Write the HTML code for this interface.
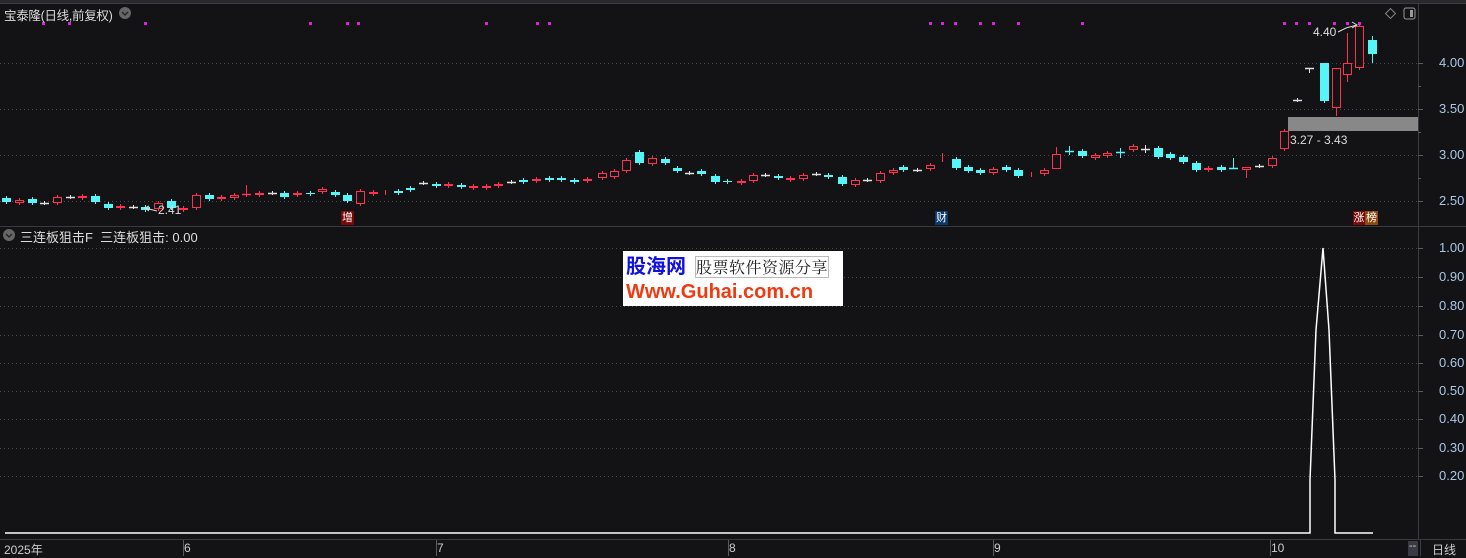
<!DOCTYPE html>
<html><head><meta charset="utf-8"><style>
html,body{margin:0;padding:0;background:#131214;width:1466px;height:556px;overflow:hidden;font-family:"Liberation Sans","Noto Sans CJK SC",sans-serif;}
.t{position:absolute;white-space:nowrap;}
</style></head><body>
<div style="position:absolute;left:0;top:0;width:1466px;height:556px;">
<svg id="s" width="1466" height="556" style="position:absolute;left:0;top:0" xmlns="http://www.w3.org/2000/svg">
<rect x="0" y="0" width="1466" height="3" fill="#2a2a2e"/>
<line x1="0" y1="3.5" x2="1466" y2="3.5" stroke="#3a3a40"/>
<line x1="1418.5" y1="4" x2="1418.5" y2="540" stroke="#3a3a40"/>
<line x1="0" y1="226.5" x2="1466" y2="226.5" stroke="#3a3a40"/>
<line x1="0" y1="539.5" x2="1466" y2="539.5" stroke="#3a3a40"/>
<line x1="1420.5" y1="540" x2="1420.5" y2="556" stroke="#3a3a40"/>
<g stroke="#4a4a50" stroke-dasharray="1,3">
<line x1="0" y1="63.5" x2="1418" y2="63.5"/><line x1="0" y1="109.5" x2="1418" y2="109.5"/>
<line x1="0" y1="155.5" x2="1418" y2="155.5"/><line x1="0" y1="201.5" x2="1418" y2="201.5"/>
<line x1="0" y1="248.5" x2="1418" y2="248.5"/><line x1="0" y1="277.5" x2="1418" y2="277.5"/>
<line x1="0" y1="306.5" x2="1418" y2="306.5"/><line x1="0" y1="335.5" x2="1418" y2="335.5"/>
<line x1="0" y1="363.5" x2="1418" y2="363.5"/><line x1="0" y1="391.5" x2="1418" y2="391.5"/>
<line x1="0" y1="419.5" x2="1418" y2="419.5"/><line x1="0" y1="448.5" x2="1418" y2="448.5"/>
<line x1="0" y1="476.5" x2="1418" y2="476.5"/>
</g>
<g stroke="#5a5a60">
<line x1="1418" y1="63.5" x2="1423" y2="63.5"/><line x1="1418" y1="109.5" x2="1423" y2="109.5"/>
<line x1="1418" y1="155.5" x2="1423" y2="155.5"/><line x1="1418" y1="201.5" x2="1423" y2="201.5"/>
<line x1="1418" y1="86.5" x2="1421" y2="86.5"/><line x1="1418" y1="132.5" x2="1421" y2="132.5"/><line x1="1418" y1="178.5" x2="1421" y2="178.5"/>
<line x1="1418" y1="248.5" x2="1423" y2="248.5"/><line x1="1418" y1="277.5" x2="1423" y2="277.5"/><line x1="1418" y1="306.5" x2="1423" y2="306.5"/><line x1="1418" y1="335.5" x2="1423" y2="335.5"/><line x1="1418" y1="363.5" x2="1423" y2="363.5"/><line x1="1418" y1="391.5" x2="1423" y2="391.5"/><line x1="1418" y1="419.5" x2="1423" y2="419.5"/><line x1="1418" y1="448.5" x2="1423" y2="448.5"/><line x1="1418" y1="476.5" x2="1423" y2="476.5"/>
<line x1="183.5" y1="540" x2="183.5" y2="556"/><line x1="436.5" y1="540" x2="436.5" y2="556"/><line x1="728.5" y1="540" x2="728.5" y2="556"/><line x1="993.5" y1="540" x2="993.5" y2="556"/><line x1="1270.5" y1="540" x2="1270.5" y2="556"/>
</g>
<rect x="1288" y="117" width="130" height="14" fill="#888"/>
<g id="c"></g>
<g fill="#e020e0" id="m"></g>
<polyline points="5,533 1310,533 1310,480 1316,330 1323,248 1329,330 1335,480 1335,533 1373,533" fill="none" stroke="#fff" stroke-width="1.5"/>
<polyline points="1338,32 1346,28 1357,25" fill="none" stroke="#ddd" stroke-width="1"/>
<polyline points="1352,22 1357,25 1352,28" fill="none" stroke="#ddd"/>
<polyline points="145,208 157,211" fill="none" stroke="#ddd"/>
<polyline points="149,206 145,208 149,211" fill="none" stroke="#ddd"/>
<rect x="1387" y="10" width="7" height="7" fill="none" stroke="#888" transform="rotate(45 1390.5 13.5)"/>
<rect x="1404" y="8" width="11" height="11" rx="2" fill="none" stroke="#999"/>
<rect x="1410" y="10" width="3" height="7" fill="#999"/>
<circle cx="125" cy="13" r="6" fill="#666"/><polyline points="122,12 125,15 128,12" fill="none" stroke="#222" stroke-width="1.3"/>
<circle cx="9" cy="235" r="6" fill="#666"/><polyline points="6,234 9,237 12,234" fill="none" stroke="#222" stroke-width="1.3"/>
<rect x="1408" y="541" width="10" height="15" fill="#3a3a44"/>
</svg>
<div class="t" style="left:4px;top:5px;font-size:12.5px;letter-spacing:-0.3px;color:#ddd">宝泰隆(日线,前复权)</div>
<div class="t" style="left:20px;top:227px;font-size:13px;color:#ddd">三连板狙击F&nbsp; 三连板狙击: 0.00</div>
<div class="t" style="left:1290px;top:133px;font-size:12px;color:#ddd">3.27 - 3.43</div>
<div class="t" style="left:1313px;top:25px;font-size:12px;color:#ddd">4.40</div>
<div class="t" style="left:158px;top:203px;font-size:12px;color:#ddd">2.41</div>
<div class="t" style="left:341px;top:211px;width:13px;height:14px;background:#7a0808;color:#fff;font-size:11px;line-height:14px;text-align:center">增</div>
<div class="t" style="left:935px;top:211px;width:13px;height:14px;background:#0a3a6a;color:#fff;font-size:11px;line-height:14px;text-align:center">财</div>
<div class="t" style="left:1353px;top:211px;width:12px;height:14px;background:#7a0808;color:#fff;font-size:11px;line-height:14px;text-align:center">涨</div>
<div class="t" style="left:1365px;top:211px;width:13px;height:14px;background:#8a4a10;color:#fff;font-size:11px;line-height:14px;text-align:center">榜</div>
<div style="position:absolute;left:1439px;top:0;font-size:13px;color:#a8c8e8;line-height:1">
<div class="t" style="top:56px">4.00</div><div class="t" style="top:102px">3.50</div><div class="t" style="top:148px">3.00</div><div class="t" style="top:194px">2.50</div>
<div class="t" style="top:241px">1.00</div><div class="t" style="top:270px">0.90</div><div class="t" style="top:299px">0.80</div><div class="t" style="top:328px">0.70</div><div class="t" style="top:356px">0.60</div><div class="t" style="top:384px">0.50</div><div class="t" style="top:412px">0.40</div><div class="t" style="top:441px">0.30</div><div class="t" style="top:469px">0.20</div>
</div>
<div class="t" style="left:4px;top:541px;font-size:12px;color:#ccc">2025年</div>
<div class="t" style="left:184px;top:541px;font-size:12px;color:#ccc">6</div>
<div class="t" style="left:437px;top:541px;font-size:12px;color:#ccc">7</div>
<div class="t" style="left:729px;top:541px;font-size:12px;color:#ccc">8</div>
<div class="t" style="left:994px;top:541px;font-size:12px;color:#ccc">9</div>
<div class="t" style="left:1271px;top:541px;font-size:12px;color:#ccc">10</div>
<div class="t" style="left:1409px;top:540px;font-size:11px;color:#ccc">--</div>
<div class="t" style="left:1432px;top:541px;font-size:12px;color:#ccc">日线</div>
<div style="position:absolute;left:623px;top:251px;width:220px;height:55px;background:#fff;">
<div class="t" style="left:3px;top:2px;font-size:20px;font-weight:bold;color:#1010e0;font-family:'Noto Sans CJK SC',sans-serif;line-height:24px">股海网</div>
<div class="t" style="left:72px;top:5px;font-size:16px;color:#222;font-family:'Noto Serif CJK SC',serif;line-height:20px;letter-spacing:0.5px;border:1px solid #bbb">股票软件资源分享</div>
<div class="t" style="left:3px;top:29px;font-size:20px;font-weight:bold;color:#f03a10;line-height:24px">Www.Guhai.com.cn</div>
</div>
</div>
<script>
var C=[
[6,'c',198,202],[19,'r',200,203],[32,'c',199,203],[44,'w',203,203],[57,'r',197,203],[70,'w',197,197],[82,'r',196,198],[95,'c',196,202],[108,'c',204,208],[120,'r',206,208],[133,'w',207,207],[145,'c',207,210],[158,'r',203,209],[171,'c',201,208],[183,'r',208,210],[196,'r',195,208],[209,'c',195,199],[221,'r',197,199],[234,'r',195,198],[246,'r',194,194,185,197],[259,'r',193,195],[272,'w',193,193],[284,'c',193,197],[297,'r',193,195],[310,'c',193,194],[322,'r',189,192],[335,'c',192,195],[347,'c',195,201],[360,'r',191,204],[373,'r',192,194],[385,'r',192,193],[398,'c',191,193],[410,'c',188,190],[423,'w',183,183],[436,'c',184,186],[448,'r',184,186],[461,'c',185,187],[473,'r',186,188],[486,'r',186,188],[498,'r',184,186],[511,'w',182,182],[523,'c',180,182],[536,'r',179,181],[549,'c',178,180],[561,'c',178,180],[574,'c',180,182],[587,'r',179,181],[602,'r',173,178],[614,'r',171,177],[626,'r',160,171],[639,'c',152,163],[652,'r',158,164],[665,'c',159,163],[677,'c',168,171],[689,'w',173,173],[701,'c',171,174],[715,'c',176,182],[727,'c',181,182],[741,'r',181,183],[753,'r',175,181],[765,'w',175,175],[778,'c',176,178],[790,'r',178,180],[803,'r',175,179],[816,'w',174,174],[828,'c',175,177],[842,'c',177,184],[855,'r',180,185],[867,'w',180,180],[880,'r',173,181],[893,'r',170,173],[903,'c',167,170],[917,'w',170,170],[930,'r',165,169],[942,'r',158,159,153,162],[956,'c',159,168],[968,'c',167,171],[980,'c',170,173],[993,'r',169,173],[1006,'c',167,170],[1018,'c',170,176],[1031,'r',174,175],[1044,'r',170,174],[1056,'r',154,169,147,169],[1069,'c',151,151,146,155],[1082,'c',151,156],[1095,'r',155,158],[1107,'r',153,156],[1120,'c',152,152,148,158],[1133,'r',146,150],[1145,'w',149,149,145,153],[1158,'c',148,157],[1170,'c',154,158],[1183,'c',157,162],[1196,'c',163,170],[1208,'r',168,170],[1221,'c',167,170],[1233,'c',168,168,158,168],[1246,'r',167,170,167,178],[1259,'w',166,166],[1272,'r',158,166],[1284,'r',131,149],[1297,'w',100,100],[1309,'w',68,68,68,73],[1324,'c',63,101,63,103],[1336,'r',68,108,68,116],[1347,'r',63,75,33,82],[1359,'r',26,68],[1372,'c',40,54,36,63]];
var col={c:'#55f5f8',r:'#ff3050',w:'#e0e0e0'};var h='';
C.forEach(function(d){var x=d[0],k=d[1],t=d[2],b=d[3],wt=d[4]!=null?d[4]:t-2,wb=d[5]!=null?d[5]:b+2,c=col[k];
h+='<line x1="'+(x+.5)+'" y1="'+wt+'" x2="'+(x+.5)+'" y2="'+wb+'" stroke="'+c+'"/>';
if(k=='w'||b-t<1){h+='<line x1="'+(x-4)+'" y1="'+(t+.5)+'" x2="'+(x+5)+'" y2="'+(t+.5)+'" stroke="'+c+'" stroke-width="1.5"/>';}
else if(k=='c'){h+='<rect x="'+(x-4)+'" y="'+t+'" width="9" height="'+(b-t)+'" fill="'+c+'"/>';}
else{h+='<rect x="'+(x-3.5)+'" y="'+(t+.5)+'" width="8" height="'+(b-t-1)+'" fill="#131214" stroke="'+c+'"/>';}});
document.getElementById('c').innerHTML=h;
var M=[43,69,145,310,347,358,486,537,549,930,942,955,980,993,1018,1082,1284,1296,1309,1334,1347,1359],m='';
M.forEach(function(x){m+='<rect x="'+(x-1)+'" y="22" width="3" height="3"/>';});
document.getElementById('m').innerHTML=m;
</script>
</body></html>
